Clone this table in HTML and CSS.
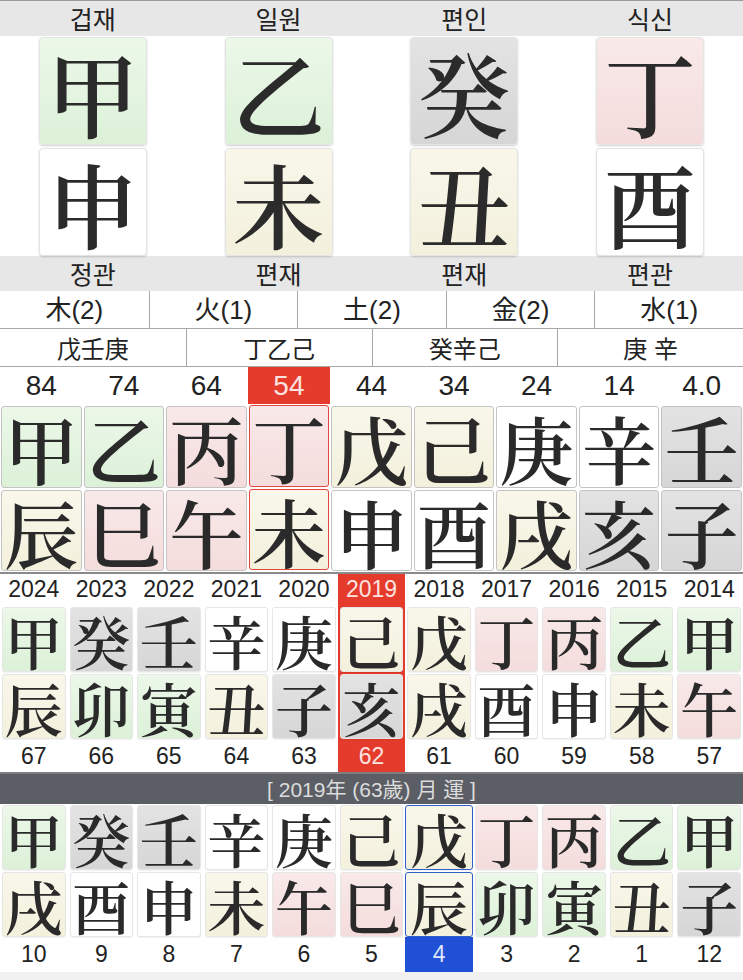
FILE: index.html
```html
<!DOCTYPE html>
<html lang="ko">
<head>
<meta charset="utf-8">
<title>사주</title>
<link rel="stylesheet" href="styles.css">
</head>
<body>
<div class="hdr top"><span>겁재</span><span>일원</span><span>편인</span><span>식신</span></div>
<div class="pillars">
  <div class="pcol"><div class="big c-g">甲</div><div class="big c-w">申</div></div>
  <div class="pcol"><div class="big c-g">乙</div><div class="big c-y">未</div></div>
  <div class="pcol"><div class="big c-k">癸</div><div class="big c-y">丑</div></div>
  <div class="pcol"><div class="big c-p">丁</div><div class="big c-w">酉</div></div>
</div>
<div class="hdr"><span>정관</span><span>편재</span><span>편재</span><span>편관</span></div>
<div class="elems"><span>木(2)</span><span>火(1)</span><span>土(2)</span><span>金(2)</span><span>水(1)</span></div>
<div class="hidden"><span>戊壬庚</span><span>丁乙己</span><span>癸辛己</span><span>庚 辛</span></div>

<div class="daeun">
  <div class="dcol"><div class="dnum">84</div><div class="dc c-g">甲</div><div class="dc c-y">辰</div></div>
  <div class="dcol"><div class="dnum">74</div><div class="dc c-g">乙</div><div class="dc c-p">巳</div></div>
  <div class="dcol"><div class="dnum">64</div><div class="dc c-p">丙</div><div class="dc c-p">午</div></div>
  <div class="dcol sel"><div class="dnum">54</div><div class="dc c-p">丁</div><div class="dc c-y">未</div></div>
  <div class="dcol"><div class="dnum">44</div><div class="dc c-y">戊</div><div class="dc c-w">申</div></div>
  <div class="dcol"><div class="dnum">34</div><div class="dc c-y">己</div><div class="dc c-w">酉</div></div>
  <div class="dcol"><div class="dnum">24</div><div class="dc c-w">庚</div><div class="dc c-y">戌</div></div>
  <div class="dcol"><div class="dnum">14</div><div class="dc c-w">辛</div><div class="dc c-k">亥</div></div>
  <div class="dcol"><div class="dnum">4.0</div><div class="dc c-k">壬</div><div class="dc c-k">子</div></div>
</div>

<div class="years">
  <div class="ycol"><div class="ynum">2024</div><div class="yc c-g">甲</div><div class="yc c-y">辰</div><div class="ynum age">67</div></div>
  <div class="ycol"><div class="ynum">2023</div><div class="yc c-k">癸</div><div class="yc c-g">卯</div><div class="ynum age">66</div></div>
  <div class="ycol"><div class="ynum">2022</div><div class="yc c-k">壬</div><div class="yc c-g">寅</div><div class="ynum age">65</div></div>
  <div class="ycol"><div class="ynum">2021</div><div class="yc c-w">辛</div><div class="yc c-y">丑</div><div class="ynum age">64</div></div>
  <div class="ycol"><div class="ynum">2020</div><div class="yc c-w">庚</div><div class="yc c-k">子</div><div class="ynum age">63</div></div>
  <div class="ycol sel"><div class="ynum">2019</div><div class="yc c-y">己</div><div class="yc c-k">亥</div><div class="ynum age">62</div></div>
  <div class="ycol"><div class="ynum">2018</div><div class="yc c-y">戊</div><div class="yc c-y">戌</div><div class="ynum age">61</div></div>
  <div class="ycol"><div class="ynum">2017</div><div class="yc c-p">丁</div><div class="yc c-w">酉</div><div class="ynum age">60</div></div>
  <div class="ycol"><div class="ynum">2016</div><div class="yc c-p">丙</div><div class="yc c-w">申</div><div class="ynum age">59</div></div>
  <div class="ycol"><div class="ynum">2015</div><div class="yc c-g">乙</div><div class="yc c-y">未</div><div class="ynum age">58</div></div>
  <div class="ycol"><div class="ynum">2014</div><div class="yc c-g">甲</div><div class="yc c-p">午</div><div class="ynum age">57</div></div>
</div>

<div class="bar">[ 2019年 (63歲) 月 運 ]</div>

<div class="months">
  <div class="mcol"><div class="yc c-g">甲</div><div class="yc c-y">戌</div><div class="mnum">10</div></div>
  <div class="mcol"><div class="yc c-k">癸</div><div class="yc c-w">酉</div><div class="mnum">9</div></div>
  <div class="mcol"><div class="yc c-k">壬</div><div class="yc c-w">申</div><div class="mnum">8</div></div>
  <div class="mcol"><div class="yc c-w">辛</div><div class="yc c-y">未</div><div class="mnum">7</div></div>
  <div class="mcol"><div class="yc c-w">庚</div><div class="yc c-p">午</div><div class="mnum">6</div></div>
  <div class="mcol"><div class="yc c-y">己</div><div class="yc c-p">巳</div><div class="mnum">5</div></div>
  <div class="mcol sel"><div class="yc c-y">戊</div><div class="yc c-y">辰</div><div class="mnum">4</div></div>
  <div class="mcol"><div class="yc c-p">丁</div><div class="yc c-g">卯</div><div class="mnum">3</div></div>
  <div class="mcol"><div class="yc c-p">丙</div><div class="yc c-g">寅</div><div class="mnum">2</div></div>
  <div class="mcol"><div class="yc c-g">乙</div><div class="yc c-y">丑</div><div class="mnum">1</div></div>
  <div class="mcol"><div class="yc c-g">甲</div><div class="yc c-k">子</div><div class="mnum">12</div></div>
</div>
<div class="foot"></div>
</body>
</html>
```
FILE: styles.css
```css
* { box-sizing: border-box; margin: 0; padding: 0; }
html, body { background: #fff; }
body {
  width: 743px;
  height: 980px;
  overflow: hidden;
  color: #2a2a2a;
  font-family: "Liberation Sans", "Noto Sans CJK KR", sans-serif;
}

/* header bands */
.hdr {
  display: grid;
  grid-template-columns: repeat(4, 1fr);
  height: 35px;
  background: #e7e7e7;
  font-family: "Noto Sans CJK KR", sans-serif;
  font-size: 25px;
  line-height: 1;
  color: #222;
}
.hdr.top { height: 36px; border-top: 1px solid #9a9a9a; }
.hdr span { display: flex; align-items: center; justify-content: center; }

/* big pillars */
.pillars {
  display: grid;
  grid-template-columns: repeat(4, 1fr);
  padding: 1px 0 0;
  height: 220px;
}
.pcol { display: flex; flex-direction: column; align-items: center; gap: 3px; }
.big {
  width: 108px;
  height: 108px;
  display: flex;
  align-items: center;
  justify-content: center;
  font-family: "Noto Serif CJK JP", "Noto Sans CJK JP", serif;
  font-weight: 600;
  font-size: 92px;
  line-height: 1;
  border: 1px solid #e4e4e4;
  border-radius: 4px;
  box-shadow: 0 1px 2px rgba(0,0,0,0.18);
  color: #2b2b2b;
}

/* cell colours */
.c-g { background: linear-gradient(#ecf8e9, #dcf1d8); }
.c-p { background: linear-gradient(#f9e9e9, #f4dcdc); }
.c-y { background: linear-gradient(#f8f7ea, #f3f0dc); }
.c-k { background: linear-gradient(#e3e3e3, #d6d6d6); }
.c-w { background: #fff; }

/* element and hidden rows */
.elems, .hidden {
  display: grid;
  height: 38px;
  border-bottom: 1px solid #a8a8a8;
  font-family: "Liberation Sans", "Noto Sans CJK KR", sans-serif;
  line-height: 1;
  color: #222;
}
.elems { grid-template-columns: repeat(5, 1fr); font-size: 26px; }
.hidden { grid-template-columns: repeat(4, 1fr); font-size: 24px; }
.elems span, .hidden span {
  display: flex; align-items: center; justify-content: center;
  border-left: 1px solid #a8a8a8;
}
.elems span:first-child, .hidden span:first-child { border-left: none; }
.hidden span { font-family: "Noto Sans CJK KR", sans-serif; }

/* daeun */
.daeun {
  display: grid;
  grid-template-columns: repeat(9, 1fr);
  border-bottom: 2px solid #8a8a8a;
}
.dcol { display: flex; flex-direction: column; gap: 2px; padding-bottom: 1px; }
.dnum {
  height: 37px;
  display: flex; align-items: center; justify-content: center;
  font-size: 28px;
  line-height: 1;
  color: #222;
}
.dc {
  height: 82px;
  margin: 0 1px;
  display: flex; align-items: center; justify-content: center;
  font-family: "Noto Serif CJK JP", "Noto Sans CJK JP", serif;
  font-weight: 600;
  font-size: 74px;
  line-height: 1;
  border: 1px solid #c4c4c4;
  border-radius: 3px;
}
.dcol .dc:last-child { height: 81px; }
.dcol.sel .dnum { background: #e53b2c; color: #fbe3e0; margin-bottom: -1px; }
.dcol.sel .dc { border-color: #e0463a; }

/* years */
.years {
  display: grid;
  grid-template-columns: repeat(11, 1fr);
  border-bottom: 2px solid #7e7e7e;
}
.ycol, .mcol { display: flex; flex-direction: column; }
.ycol { gap: 2px; }
.ynum {
  height: 31px;
  display: flex; align-items: center; justify-content: center;
  font-size: 23px;
  line-height: 1;
  color: #222;
}
.ynum.age { height: 31px; font-size: 23px; }
.yc {
  height: 65px;
  margin: 0 2px;
  display: flex; align-items: center; justify-content: center;
  font-family: "Noto Serif CJK JP", "Noto Sans CJK JP", serif;
  font-weight: 600;
  font-size: 58px;
  line-height: 1;
  border: 1px solid #e6e6e6;
  border-radius: 3px;
  box-shadow: 0 1px 1px rgba(0,0,0,0.06);
}
.ycol.sel { background: #e53b2c; }
.ycol.sel .ynum { color: #fbe3e0; }

/* dark bar */
.bar {
  height: 30px;
  background: #5b5e64;
  color: #dcdcdc;
  font-size: 21px;
  line-height: 1;
  display: flex; align-items: center; justify-content: center;
  font-family: "Liberation Sans", "Noto Sans CJK TC", sans-serif;
}

/* months */
.months {
  display: grid;
  grid-template-columns: repeat(11, 1fr);
  padding-top: 1px;
}
.mcol { gap: 2px; }
.mnum {
  height: 35px;
  display: flex; align-items: center; justify-content: center;
  font-size: 23px;
  line-height: 1;
  color: #222;
  margin-top: -2px;
}
.mcol.sel .yc { border: 1.5px solid #2f5fc8; margin: 0; }
.mcol.sel .mnum { background: #1f50d6; color: #dfe6fb; }

.foot { height: 13px; background: #f1f1f1; }
```
